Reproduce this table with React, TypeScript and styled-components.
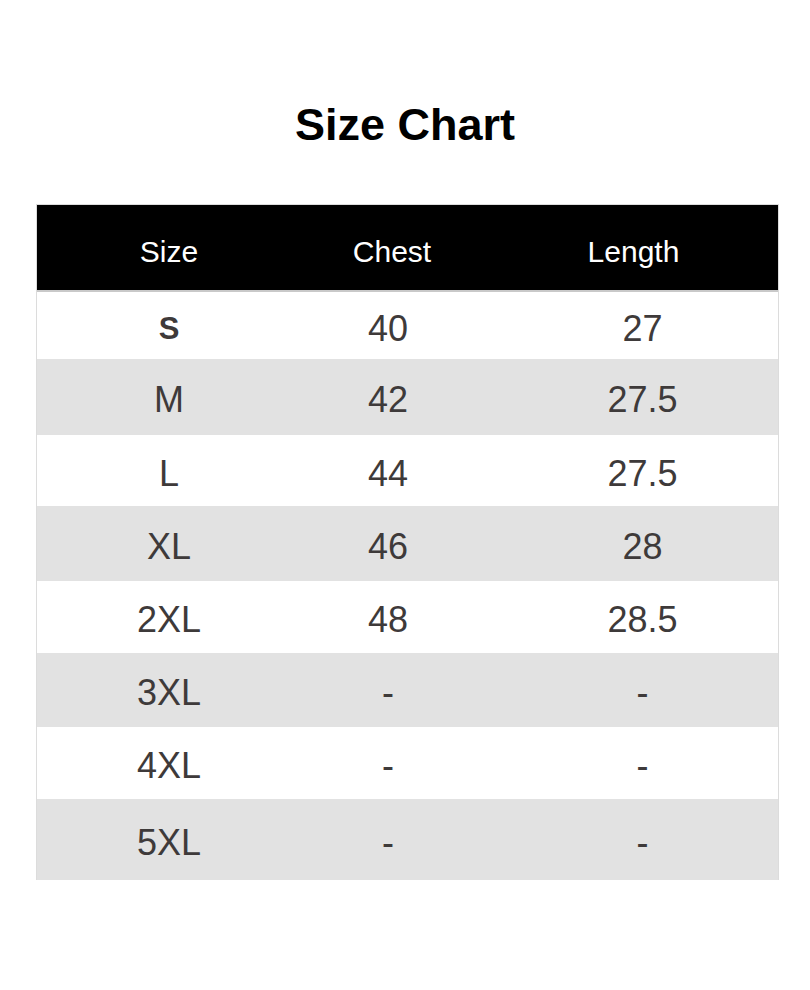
import React from "react";
import styled, { createGlobalStyle } from "styled-components";

const Global = createGlobalStyle`
  html, body { margin: 0; padding: 0; background: #ffffff; }
  body { font-family: "Liberation Sans", Arial, sans-serif; }
`;

const Page = styled.div`
  width: 810px;
  height: 990px;
  background: #ffffff;
  display: flex;
  flex-direction: column;
  align-items: flex-start;
`;

const Title = styled.h1`
  align-self: stretch;
  margin: 102px 0 57px 0;
  font-size: 45px;
  line-height: 1;
  font-weight: 700;
  color: #000000;
  text-align: center;
`;

const Table = styled.div`
  margin-left: 36px;
  width: 741px;
  border: 1px solid #dcdcdc;
  border-bottom: none;
  display: flex;
  flex-direction: column;
`;

const Row = styled.div<{ $h: number; $bg: string; $line?: string }>`
  display: grid;
  grid-template-columns: 264px 174px 1fr;
  height: ${(p) => p.$h}px;
  background: ${(p) => p.$bg};
  border-bottom: ${(p) => (p.$line ? `2px solid ${p.$line}` : "none")};
  box-sizing: border-box;
`;

const HeadCell = styled.div<{ $pad?: number }>`
  display: flex;
  align-items: center;
  justify-content: center;
  padding-top: 8px;
  padding-left: ${(p) => p.$pad ?? 0}px;
  font-size: 30px;
  color: #ffffff;
`;

const Cell = styled.div<{ $pad?: number; $bold?: boolean }>`
  display: flex;
  align-items: center;
  justify-content: center;
  padding-top: 6px;
  padding-left: ${(p) => p.$pad ?? 0}px;
  font-size: ${(p) => (p.$bold ? 31 : 36)}px;
  font-weight: ${(p) => (p.$bold ? 700 : 400)};
  color: #3e3a3a;
`;

const rows = [
  { size: "S", chest: "40", length: "27", h: 67, bold: true },
  { size: "M", chest: "42", length: "27.5", h: 76 },
  { size: "L", chest: "44", length: "27.5", h: 71 },
  { size: "XL", chest: "46", length: "28", h: 75 },
  { size: "2XL", chest: "48", length: "28.5", h: 72 },
  { size: "3XL", chest: "-", length: "-", h: 74 },
  { size: "4XL", chest: "-", length: "-", h: 72 },
  { size: "5XL", chest: "-", length: "-", h: 81 },
];

export default function App() {
  return (
    <>
      <Global />
      <Page>
        <Title>Size Chart</Title>
        <Table>
          <Row $h={87} $bg="#000000" $line="#c9c9c9">
            <HeadCell>Size</HeadCell>
            <HeadCell $pad={8}>Chest</HeadCell>
            <HeadCell $pad={14}>Length</HeadCell>
          </Row>
          {rows.map((r, i) => (
            <Row key={r.size} $h={r.h} $bg={i % 2 === 0 ? "#ffffff" : "#e2e2e2"}>
              <Cell $bold={r.bold}>{r.size}</Cell>
              <Cell $pad={-1}>{r.chest}</Cell>
              <Cell $pad={32}>{r.length}</Cell>
            </Row>
          ))}
        </Table>
      </Page>
    </>
  );
}
